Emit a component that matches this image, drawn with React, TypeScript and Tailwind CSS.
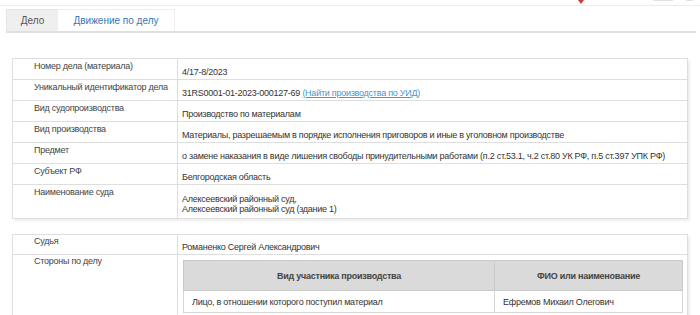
export default function App() {
    const rows: { label: string; value: React.ReactNode; tall?: boolean }[] = [
        { label: "Номер дела (материала)", value: "4/17-8/2023" },
        {
            label: "Уникальный идентификатор дела",
            value: (
                <>
                    31RS0001-01-2023-000127-69{" "}
                    <a href="#" className="text-[#4f93c9] underline">
                        (Найти производства по УИД)
                    </a>
                </>
            ),
        },
        { label: "Вид судопроизводства", value: "Производство по материалам" },
        {
            label: "Вид производства",
            value: "Материалы, разрешаемым в порядке исполнения приговоров и иные в уголовном производстве",
        },
        {
            label: "Предмет",
            value: "о замене наказания в виде лишения свободы принудительными работами (п.2 ст.53.1, ч.2 ст.80 УК РФ, п.5 ст.397 УПК РФ)",
        },
        { label: "Субъект РФ", value: "Белгородская область" },
        {
            label: "Наименование суда",
            value: (
                <>
                    Алексеевский районный суд,
                    <br />
                    Алексеевский районный суд (здание 1)
                </>
            ),
            tall: true,
        },
    ];

    return (
        <div className="relative w-[700px] h-[315px] overflow-hidden bg-white font-['Liberation_Sans',Arial,sans-serif] text-[#333]">
            {/* cropped header remains */}
            <div className="h-[6px] border-b border-[#ececec]" />
            <div className="absolute top-0 left-[578px] w-0 h-0 border-l-[3px] border-r-[3px] border-t-[4px] border-l-transparent border-r-transparent border-t-[#d23b3b]" />
            <div className="absolute top-0 left-[653px] w-[20px] h-[1px] bg-[#e2e2e2]" />
            <div className="absolute top-0 left-[686px] w-[7px] h-[1px] bg-[#e2e2e2]" />

            {/* Tabs */}
            <div className="mt-[3px] ml-[6px] mr-[4px] flex border-b-2 border-[#e0e0e0]">
                <div className="w-[52px] h-[22px] flex items-center justify-center bg-[#efefef] border-t border-l border-[#e6e6e6] text-[10px] text-[#555]">
                    Дело
                </div>
                <div className="w-[117px] h-[22px] flex items-center justify-center border-t border-r border-[#f0f0f0] text-[10px] text-[#3a77b3]">
                    Движение по делу
                </div>
            </div>

            {/* Case info */}
            <table className="mt-[25px] ml-[12px] w-[676px] table-fixed border-collapse border border-[#dedede] shadow-[2px_2px_2px_rgba(0,0,0,0.07)] text-[9px] leading-[10px] tracking-[-0.25px]">
                <colgroup>
                    <col className="w-[165px]" />
                    <col />
                </colgroup>
                <tbody>
                    {rows.map((r) => (
                        <tr key={r.label} className={r.tall ? "h-[34px]" : "h-[21px]"}>
                            <td className="align-top pl-[21px] pt-[2px] text-[#444] border border-[#dedede]">
                                {r.label}
                            </td>
                            <td className="align-middle pl-[4px] pt-[6px] pb-[1px] border border-[#dedede] whitespace-nowrap">
                                {r.value}
                            </td>
                        </tr>
                    ))}
                </tbody>
            </table>

            {/* Judge and parties */}
            <table className="mt-[15px] ml-[12px] w-[676px] table-fixed border-collapse border border-[#dedede] shadow-[2px_2px_2px_rgba(0,0,0,0.07)] text-[9px] leading-[10px] tracking-[-0.25px]">
                <colgroup>
                    <col className="w-[165px]" />
                    <col />
                </colgroup>
                <tbody>
                    <tr className="h-[20px]">
                        <td className="align-top pl-[21px] pt-[1px] text-[#444] border border-[#dedede]">Судья</td>
                        <td className="align-middle pl-[4px] pt-[6px] pb-[1px] border border-[#dedede]">
                            Романенко Сергей Александрович
                        </td>
                    </tr>
                    <tr>
                        <td className="align-top pl-[21px] pt-[1px] text-[#444] border border-[#dedede]">
                            Стороны по делу
                        </td>
                        <td className="align-top pl-[5px] pr-[4px] pt-[5px] pb-[2px] border border-[#dedede]">
                            <table className="w-full table-fixed border-collapse border border-[#cfcfcf]">
                                <colgroup>
                                    <col className="w-[311px]" />
                                    <col />
                                </colgroup>
                                <thead>
                                    <tr className="h-[30px] bg-[#dadada]">
                                        <th className="font-bold text-[#444] text-center border border-[#c9c9c9]">
                                            Вид участника производства
                                        </th>
                                        <th className="font-bold text-[#444] text-center border border-[#c9c9c9]">
                                            ФИО или наименование
                                        </th>
                                    </tr>
                                </thead>
                                <tbody>
                                    <tr className="h-[22px]">
                                        <td className="pl-[8px] border border-[#d6d6d6]">
                                            Лицо, в отношении которого поступил материал
                                        </td>
                                        <td className="pl-[8px] border border-[#d6d6d6]">
                                            Ефремов Михаил Олегович
                                        </td>
                                    </tr>
                                </tbody>
                            </table>
                        </td>
                    </tr>
                </tbody>
            </table>
        </div>
    );
}
